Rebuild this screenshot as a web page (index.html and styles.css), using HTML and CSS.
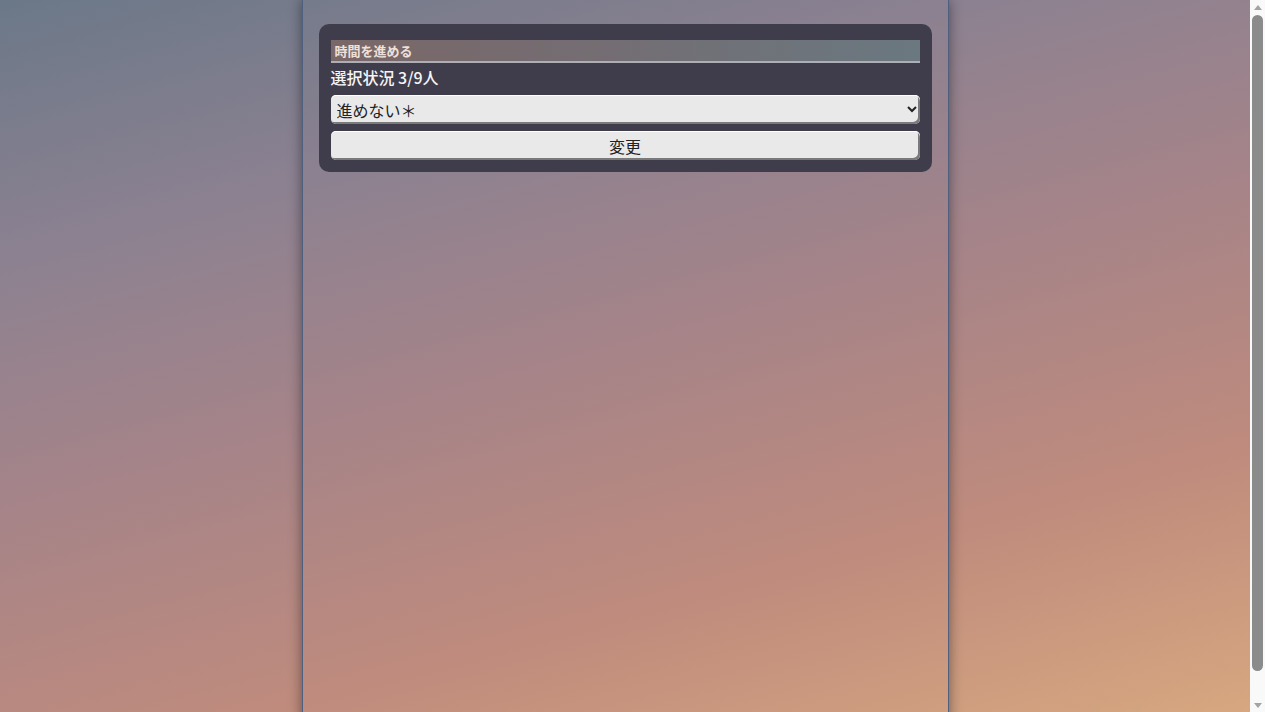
FILE: index.html
```html
<!DOCTYPE html>
<html lang="ja">
<head>
    <meta charset="UTF-8">
    <meta name="viewport" content="width=device-width, initial-scale=1.0">
    <title>時間を進める</title>
    <link rel="stylesheet" href="styles.css">
</head>
<body>

<div class="page">
    <div class="container">
        <div class="panel">
            <h2 class="panel-title">時間を進める</h2>
            <p class="status">選択状況 3/9人</p>
            <form method="post" class="vote-form">
                <select name="advance" class="vote-select">
                    <option value="0" selected>進めない＊</option>
                    <option value="1">進める</option>
                </select>
                <button type="submit" class="vote-button">変更</button>
            </form>
        </div>
    </div>
</div>

<!-- полоса прокрутки -->
<div class="scrollbar">
    <div class="scroll-arrow up"></div>
    <div class="scroll-track">
        <div class="scroll-thumb"></div>
    </div>
    <div class="scroll-arrow down"></div>
</div>

</body>
</html>
```

FILE: styles.css
```css
html, body {
    height: 100%;
    margin: 0;
    padding: 0;
    overflow: hidden;
}

body {
    display: flex;
    font-family: "Noto Sans CJK JP", "Noto Sans", sans-serif;
    color: #f5f5f5;
}

.page {
    flex: 1;
    height: 100vh;
    overflow: hidden;
    background: linear-gradient(165deg, #6b7888 0%, #8c8191 25%, #a78488 50%, #bf8b7d 75%, #d6a780 100%);
}

.container {
    width: 613px;
    min-height: 718px;
    margin: 0 auto;
    padding: 24px 16px 0;
    border-left: 1px solid #4f5f80;
    border-right: 1px solid #4f5f80;
    box-shadow: 0 0 12px rgba(0, 0, 0, 0.45);
}

.panel {
    padding: 16px 12px 12px;
    background-color: #3f3d4b;
    border-radius: 10px;
}

.panel-title {
    margin: 0;
    padding: 2px 4px 1px;
    font-size: 13px;
    font-weight: bold;
    line-height: 18px;
    color: #eee0da;
    background: linear-gradient(90deg, #7a6768 0%, #736e74 50%, #6a7880 100%);
    border-bottom: 2px solid #aeaeb6;
}

.status {
    margin: 3px 0 7px;
    font-size: 16px;
    font-weight: 500;
    line-height: 22px;
}

.vote-form {
    display: flex;
    flex-direction: column;
    gap: 7px;
}

.vote-select,
.vote-button {
    height: 29px;
    width: 100%;
    font-family: "Noto Sans CJK JP", "Noto Sans", sans-serif;
    font-size: 16px;
    color: #222;
    background-color: #e9e9e9;
    border: none;
    border-radius: 5px;
    box-shadow: inset 0 1px 0 #fff, inset -2px -2px 0 #7a7a7a;
}

.vote-select {
    padding: 0 2px;
}

.vote-button {
    cursor: pointer;
}

/* Полоса прокрутки справа */
.scrollbar {
    width: 15px;
    height: 100vh;
    display: flex;
    flex-direction: column;
    background-color: #f9f9f9;
}

.scroll-arrow {
    height: 14px;
    display: flex;
    align-items: center;
    justify-content: center;
}

.scroll-arrow::before {
    content: "";
    border-left: 4px solid transparent;
    border-right: 4px solid transparent;
}

.scroll-arrow.up::before {
    border-bottom: 5px solid #a3a3a3;
}

.scroll-arrow.down::before {
    border-top: 5px solid #a3a3a3;
}

.scroll-track {
    flex: 1;
    padding: 1px 2px 0;
}

.scroll-thumb {
    height: 656px;
    background-color: #8b8b8b;
    border-radius: 6px;
}
```
